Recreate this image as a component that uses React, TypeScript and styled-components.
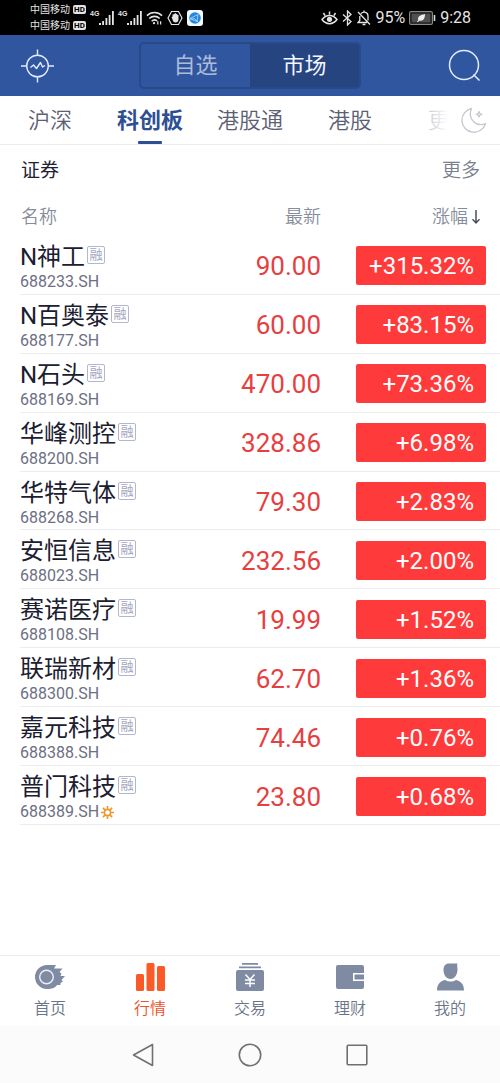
import React, { useState } from 'react';
import styled, { createGlobalStyle } from 'styled-components';

const GlobalStyle = createGlobalStyle`
  *, *::before, *::after { box-sizing: border-box; }
  body {
    margin: 0;
    background: #fff;
    color: #1d2233;
    font-family: Roboto, "Noto Sans CJK SC", sans-serif;
  }
  button {
    font: inherit;
    color: inherit;
    background: none;
    border: 0;
    padding: 0;
    cursor: pointer;
  }
  svg { display: block; flex: none; }
`;

const Page = styled.div`
  display: flex;
  flex-direction: column;
  min-height: 100vh;
  background: #fff;
`;

/* Status bar */
const StatusBar = styled.div`
  display: flex;
  align-items: center;
  justify-content: space-between;
  height: 35px;
  padding: 0 29px 0 30px;
  background: #000;
  color: #e4e4e4;
`;
const StatusGroup = styled.div<{ $gap: number }>`
  display: flex;
  align-items: center;
  gap: ${(p) => p.$gap}px;
`;
const Carriers = styled.div`
  display: flex;
  flex-direction: column;
  gap: 1px;
`;
const Carrier = styled.div`
  display: flex;
  align-items: center;
  gap: 3px;
  font-size: 10px;
  line-height: 15px;
`;
const HdBadge = styled.span`
  width: 13px;
  border-radius: 2px;
  background: #e4e4e4;
  color: #000;
  font-size: 8px;
  font-weight: 700;
  line-height: 9px;
  text-align: center;
`;
const Signal = styled.div`
  display: flex;
  align-items: flex-start;
  width: 24px;
  font-family: "Liberation Sans", sans-serif;
  font-size: 7px;
  font-weight: 700;
  line-height: 8px;
`;
const StatusText = styled.span`
  font-size: 16px;
  line-height: 20px;
`;

/* Top bar */
const TopBar = styled.header`
  display: flex;
  align-items: center;
  justify-content: space-between;
  height: 61px;
  padding: 0 20px 0 21px;
  background: #3056a0;
  color: #e4ecfb;
`;
const Segmented = styled.div`
  display: flex;
  width: 222px;
  height: 47px;
  overflow: hidden;
  border: 2px solid #284a8b;
  border-radius: 5px;
`;
const Segment = styled.button<{ $active: boolean }>`
  flex: 1;
  font-size: 22px;
  line-height: 30px;
  color: ${(p) => (p.$active ? '#f2f6ff' : '#aebbd6')};
  background: ${(p) => (p.$active ? '#26447f' : 'transparent')};
`;

/* Market tabs */
const TabBar = styled.nav`
  position: relative;
  display: flex;
  height: 49px;
  overflow: hidden;
  border-bottom: 1px solid #ececef;
`;
const Tab = styled.button<{ $active: boolean }>`
  display: flex;
  flex: 1 0 20%;
  flex-direction: column;
  align-items: center;
  justify-content: flex-end;
  gap: 4px;
  font-size: 22px;
  line-height: 32px;
  font-weight: ${(p) => (p.$active ? 700 : 350)};
  color: ${(p) => (p.$active ? '#2d4f94' : '#5a6072')};

  &::after {
    content: '';
    width: 24px;
    height: 3px;
    border-radius: 1px;
    background: ${(p) => (p.$active ? '#2d4f94' : 'transparent')};
  }
`;
const ThemeFade = styled.div`
  position: absolute;
  top: 0;
  right: 0;
  bottom: 0;
  display: flex;
  align-items: center;
  justify-content: flex-end;
  width: 76px;
  padding-right: 13px;
  color: #c6c8d0;
  background: linear-gradient(to right, rgba(255, 255, 255, 0.6), #fff 24px);
`;

/* Quotes */
const Main = styled.main`
  flex: 1;
`;
const SectionHead = styled.div`
  display: flex;
  align-items: center;
  justify-content: space-between;
  height: 52px;
  padding: 0 20px 0 21px;
`;
const SectionTitle = styled.h2`
  margin: 0;
  font-size: 19px;
  line-height: 28px;
  font-weight: 400;
`;
const MoreLink = styled.a`
  font-size: 19px;
  line-height: 28px;
  font-weight: 350;
  color: #777e8d;
  text-decoration: none;
`;
const Quotes = styled.table`
  width: calc(100% - 20px);
  height: 628px;
  margin-left: 20px;
  border-collapse: separate;
  border-spacing: 0;
  table-layout: fixed;
`;
const HeadCell = styled.th<{ $align?: string; $width?: number }>`
  width: ${(p) => (p.$width ? `${p.$width}px` : 'auto')};
  height: 39px;
  padding: 0 0 0 1px;
  font-size: 18px;
  line-height: 26px;
  font-weight: 350;
  color: #868c9a;
  text-align: ${(p) => p.$align || 'left'};
`;
const SortButton = styled.button`
  display: inline-flex;
  align-items: center;
  gap: 3px;
  margin-right: 19px;
  vertical-align: top;
`;
const Cell = styled.td`
  height: 58px;
  padding: 3px 0 0;
  border-bottom: 1px solid #ededf0;
`;
const NameLine = styled.div`
  display: flex;
  align-items: flex-start;
  gap: 2px;
  height: 31px;
  font-size: 24px;
  line-height: 32px;
  white-space: nowrap;
  color: #1b2030;
`;
const MarginTag = styled.span`
  width: 18px;
  height: 18px;
  margin-top: 5px;
  border: 1px solid #b4b6cc;
  border-radius: 2px;
  font-size: 13px;
  line-height: 16px;
  text-align: center;
  color: #a3a5c0;
`;
const CodeLine = styled.div`
  display: flex;
  align-items: center;
  gap: 2px;
  font-size: 16px;
  line-height: 20px;
  color: #6c7082;
`;
const PriceCell = styled(Cell)`
  font-size: 26px;
  line-height: 36px;
  text-align: right;
  color: #e5403f;
`;
const ChangeCell = styled(Cell)`
  padding: 2px 14px 0 35px;
`;
const Change = styled.span`
  display: block;
  padding: 1px 12px 0 0;
  border-radius: 2px;
  background: #ff3a3b;
  color: #fff;
  font-size: 24px;
  line-height: 38px;
  text-align: right;
`;

/* Bottom navigation */
const BottomNav = styled.nav`
  display: flex;
  height: 71px;
  border-top: 1px solid #ececef;
`;
const NavItem = styled.a<{ $active?: boolean }>`
  display: flex;
  flex: 1;
  flex-direction: column;
  align-items: center;
  gap: 5px;
  padding-top: 6px;
  font-size: 16px;
  line-height: 24px;
  font-weight: 350;
  text-decoration: none;
  color: ${(p) => (p.$active ? '#f0501f' : '#6c7488')};
`;
const SystemNav = styled.div`
  display: flex;
  align-items: center;
  justify-content: center;
  gap: 84px;
  height: 57px;
  background: #fbfbfb;
  color: #707070;
`;

const SignalIcon = () => (
  <svg width="15" height="16" viewBox="0 0 15 16" fill="currentColor">
    <path d="M0 13h2v2H0zM3.200 11h1.800v4H3.200zM6.500 8h1.800v7H6.500zM9.700 5h1.800v10H9.700zM13 1h1.800v14H13z" />
  </svg>
);
const WifiIcon = () => (
  <svg width="17" height="16" viewBox="0 0 18 16" fill="none" stroke="currentColor" strokeWidth="1.700">
    <path d="M1 5.500c4.500-4.500 11.500-4.500 16 0M3.500 8.500c3-3 8-3 11 0M6 11.500c1.700-1.700 4-1.800 5.700-.3" />
    <circle cx="8.500" cy="13.500" r="1.200" fill="currentColor" stroke="none" />
    <path d="M12.500 11.500v3.500M15.500 15v-3.500" strokeWidth="1.300" />
  </svg>
);
const HandIcon = () => (
  <svg width="16" height="16" viewBox="0 0 16 16">
    <path d="M4.500 1.500h7L15 8l-3.500 6.500h-7L1 8z" fill="none" stroke="currentColor" strokeWidth="1.200" />
    <path d="M4.500 7l1-.3V4.500h1.200V3.700h1.200v-.5h1.200v.8h1.200v1h1.200V9.500c0 2-1.200 3-3 3s-2.500-1-3-3z" fill="currentColor" />
  </svg>
);
const AppBadge = () => (
  <svg width="16" height="16" viewBox="0 0 16 16">
    <rect width="16" height="16" rx="3" fill="#f4f9ff" />
    <circle cx="8" cy="8" r="5.800" fill="#2186e0" />
    <path d="M3 8.500l8-4-1 7zM3.500 9.500l4-1 4 4" fill="none" stroke="#b9dcfa" strokeWidth=".8" />
  </svg>
);
const EyeIcon = () => (
  <svg width="17" height="16" viewBox="0 0 17 16" fill="none" stroke="currentColor" strokeWidth="1.500">
    <path d="M1 9.500c4-5.500 11-5.500 15 0-4 5.500-11 5.500-15 0zM8.500 4.500V1.500M4 5.500L2.500 3M13 5.500L14.500 3" />
    <circle cx="8.500" cy="9.300" r="2.600" fill="currentColor" stroke="none" />
  </svg>
);
const BluetoothIcon = () => (
  <svg width="11" height="16" viewBox="0 0 11 16" fill="none" stroke="currentColor" strokeWidth="1.300">
    <path d="M1 4.500l8 7L5.500 15V1L9 4.500l-8 7" />
  </svg>
);
const MutedIcon = () => (
  <svg width="14" height="16" viewBox="0 0 14 16" fill="none" stroke="currentColor" strokeWidth="1.300">
    <path d="M1 2l12 12.500M4 3.500C7 .8 11 2.500 11 6v4.500M2.800 6v4.500L1 12.500h9M5.500 14.500h3M7 2V.5" />
  </svg>
);
const BatteryIcon = () => (
  <svg width="27" height="14" viewBox="0 0 27 14">
    <rect x=".6" y=".6" width="22.800" height="12.800" rx="1.500" fill="#111" stroke="#8a8a8a" strokeWidth="1.200" />
    <rect x="2.500" y="2.500" width="19" height="9" fill="#505050" />
    <path d="M8 11l1.200-2C8.500 5 12 4 16 3c0 5-2 7.500-5.800 6.500L9 11.300z" fill="#f0f0f0" />
    <path d="M25.500 4v6" stroke="#d8d8d8" strokeWidth="1.600" />
  </svg>
);
const TargetIcon = () => (
  <svg width="33" height="34" viewBox="1 0 33 34" fill="none" stroke="currentColor" strokeWidth="1.400">
    <circle cx="17.500" cy="17" r="10.800" />
    <path d="M17.500 .5v6M17.500 27.500v6M1 17h6M28 17h6" />
    <path d="M10.500 18.500l3-2.500 3 3.500 4-6 2 4.500 2.500-1.500" strokeLinejoin="round" />
  </svg>
);
const SearchIcon = () => (
  <svg width="34" height="34" viewBox="-1 0 34 34" fill="none" stroke="currentColor" strokeWidth="1.500">
    <circle cx="17" cy="16" r="14.500" />
    <path d="M26.500 25.500l6 6" />
  </svg>
);
const MoonIcon = () => (
  <svg width="26" height="26" viewBox="0 0 26 26" fill="none" stroke="currentColor" strokeWidth="1.300" strokeLinejoin="round">
    <path d="M10.500 1.500A12 12 0 1 0 24.500 16.500C15.500 20.500 6 12 10.500 1.500z" />
    <path d="M18 4.500l.8 2 2 .8-2 .8-.8 2-.8-2-2-.8 2-.8z" />
  </svg>
);
const SortArrow = () => (
  <svg width="10" height="16" viewBox="0 0 10 16" fill="none" stroke="#4a4f5e" strokeWidth="1.500">
    <path d="M5 1v12.500M1.500 10.300L5 14l3.500-3.700" />
  </svg>
);
const SunIcon = () => (
  <svg width="13" height="13" viewBox="0 0 13 13" fill="none" stroke="#f0962c" strokeWidth="1.600">
    <circle cx="6.500" cy="6.500" r="3.100" />
    <path d="M6.500 0v2.800M6.500 10.200V13M0 6.500h2.800M10.200 6.500H13M1.900 1.900l2 2M9.100 9.100l2 2M1.900 11.100l2-2M9.100 3.900l2-2" />
  </svg>
);

const HomeIcon = () => (
  <svg width="32" height="30" viewBox="0 0 32 30">
    <path d="M13 3H22l-2 3.500h8.500L25.500 10l2 1.500-1 2.500H31l-3.500 4 1.500 1.500-2.500 1.500v2h-3.500C21 26 18 27 13 27A12 12 0 0 1 13 3z" fill="#7f8aa3" />
    <circle cx="12.500" cy="15" r="6.800" fill="none" stroke="#eef0f5" strokeWidth="1.400" />
  </svg>
);
const BarsIcon = () => (
  <svg width="30" height="30" viewBox="0 0 30 30" fill="#fa5a28">
    <rect x="1" y="12" width="8" height="17" rx="1.500" />
    <rect x="11.500" y="1" width="8" height="28" rx="1.500" />
    <rect x="22" y="4" width="8" height="25" rx="1.500" />
  </svg>
);
const TradeIcon = () => (
  <svg width="30" height="30" viewBox="0 0 30 30">
    <path d="M7 1h16v1.800H7zM4 4.500h22v1.800H4zM3 8h24a2 2 0 0 1 2 2v17a2 2 0 0 1-2 2H3a2 2 0 0 1-2-2V10a2 2 0 0 1 2-2z" fill="#7f8aa3" />
    <path d="M10.500 12.500l4.500 5 4.500-5M15 17.500V25M10 18h10M10 21.500h10" fill="none" stroke="#fff" strokeWidth="1.500" />
  </svg>
);
const WalletIcon = () => (
  <svg width="30" height="30" viewBox="0 0 30 30">
    <path d="M3 3h24a2 2 0 0 1 2 2v6H18v8h11v6a2 2 0 0 1-2 2H3a2 2 0 0 1-2-2V5a2 2 0 0 1 2-2zM19.500 12.500H29v5h-9.500z" fill="#7f8aa3" />
  </svg>
);
const PersonIcon = () => (
  <svg width="30" height="30" viewBox="0 0 30 30" fill="#7f8aa3">
    <path d="M14 1.500h8.500c-.8 1.500 0 3 0 6C22.500 12.500 19.500 17 15.500 17S8.500 13 8.500 8C8.500 4 10.500 1.500 14 1.500z" />
    <path d="M2 28.500c0-6 3-9.500 8-10.500 3.500 2 7.500 2 11 0 5 1 8 4.500 8 10.500z" />
  </svg>
);
const BackIcon = () => (
  <svg width="22" height="24" viewBox="0 0 22 24" fill="none" stroke="currentColor" strokeWidth="1.600" strokeLinejoin="round">
    <path d="M20.500 1.500v21L1.500 12z" />
  </svg>
);
const CircleIcon = () => (
  <svg width="24" height="24" viewBox="0 0 24 24" fill="none" stroke="currentColor" strokeWidth="1.600">
    <circle cx="12" cy="12" r="10.700" />
  </svg>
);
const SquareIcon = () => (
  <svg width="22" height="22" viewBox="0 0 22 22" fill="none" stroke="currentColor" strokeWidth="1.600">
    <rect x="1.200" y="1.200" width="19.600" height="19.600" rx="1" />
  </svg>
);

interface Stock {
  name: string;
  code: string;
  price: string;
  change: string;
  flagged?: boolean;
}

const stocks: Stock[] = [
  { name: 'N神工', code: '688233.SH', price: '90.00', change: '+315.32%' },
  { name: 'N百奥泰', code: '688177.SH', price: '60.00', change: '+83.15%' },
  { name: 'N石头', code: '688169.SH', price: '470.00', change: '+73.36%' },
  { name: '华峰测控', code: '688200.SH', price: '328.86', change: '+6.98%' },
  { name: '华特气体', code: '688268.SH', price: '79.30', change: '+2.83%' },
  { name: '安恒信息', code: '688023.SH', price: '232.56', change: '+2.00%' },
  { name: '赛诺医疗', code: '688108.SH', price: '19.99', change: '+1.52%' },
  { name: '联瑞新材', code: '688300.SH', price: '62.70', change: '+1.36%' },
  { name: '嘉元科技', code: '688388.SH', price: '74.46', change: '+0.76%' },
  { name: '普门科技', code: '688389.SH', price: '23.80', change: '+0.68%', flagged: true },
];

const tabs = ['沪深', '科创板', '港股通', '港股', '更多'];
const segments = ['自选', '市场'];
const navItems = [
  { label: '首页', Icon: HomeIcon },
  { label: '行情', Icon: BarsIcon },
  { label: '交易', Icon: TradeIcon },
  { label: '理财', Icon: WalletIcon },
  { label: '我的', Icon: PersonIcon },
];

export default function App() {
  const [segment, setSegment] = useState('市场');
  const [tab, setTab] = useState('科创板');

  return (
    <Page>
      <GlobalStyle />
      <StatusBar>
        <StatusGroup $gap={4}>
          <Carriers>
            {[0, 1].map((sim) => (
              <Carrier key={sim}>
                中国移动<HdBadge>HD</HdBadge>
              </Carrier>
            ))}
          </Carriers>
          <Signal>4G<SignalIcon /></Signal>
          <Signal>4G<SignalIcon /></Signal>
          <WifiIcon />
          <HandIcon />
          <AppBadge />
        </StatusGroup>
        <StatusGroup $gap={4}>
          <EyeIcon />
          <BluetoothIcon />
          <MutedIcon />
          <StatusText>95%</StatusText>
          <BatteryIcon />
          <StatusText>9:28</StatusText>
        </StatusGroup>
      </StatusBar>

      <TopBar>
        <button type="button" aria-label="诊断"><TargetIcon /></button>
        <Segmented>
          {segments.map((s) => (
            <Segment key={s} type="button" $active={s === segment} onClick={() => setSegment(s)}>
              {s}
            </Segment>
          ))}
        </Segmented>
        <button type="button" aria-label="搜索"><SearchIcon /></button>
      </TopBar>

      <TabBar>
        {tabs.map((t) => (
          <Tab key={t} type="button" $active={t === tab} onClick={() => setTab(t)}>
            {t}
          </Tab>
        ))}
        <ThemeFade>
          <button type="button" aria-label="夜间模式"><MoonIcon /></button>
        </ThemeFade>
      </TabBar>

      <Main>
        <SectionHead>
          <SectionTitle>证券</SectionTitle>
          <MoreLink href="#more">更多</MoreLink>
        </SectionHead>
        <Quotes>
          <thead>
            <tr>
              <HeadCell>名称</HeadCell>
              <HeadCell $align="right" $width={120}>最新</HeadCell>
              <HeadCell $align="right" $width={179}>
                <SortButton type="button">涨幅<SortArrow /></SortButton>
              </HeadCell>
            </tr>
          </thead>
          <tbody>
            {stocks.map((s) => (
              <tr key={s.code}>
                <Cell>
                  <NameLine>{s.name}<MarginTag>融</MarginTag></NameLine>
                  <CodeLine>{s.code}{s.flagged && <SunIcon />}</CodeLine>
                </Cell>
                <PriceCell>{s.price}</PriceCell>
                <ChangeCell><Change>{s.change}</Change></ChangeCell>
              </tr>
            ))}
          </tbody>
        </Quotes>
      </Main>

      <BottomNav>
        {navItems.map(({ label, Icon }) => (
          <NavItem key={label} href="#nav" $active={label === '行情'}>
            <Icon />
            {label}
          </NavItem>
        ))}
      </BottomNav>
      <SystemNav>
        <button type="button" aria-label="返回"><BackIcon /></button>
        <button type="button" aria-label="主屏幕"><CircleIcon /></button>
        <button type="button" aria-label="最近任务"><SquareIcon /></button>
      </SystemNav>
    </Page>
  );
}
